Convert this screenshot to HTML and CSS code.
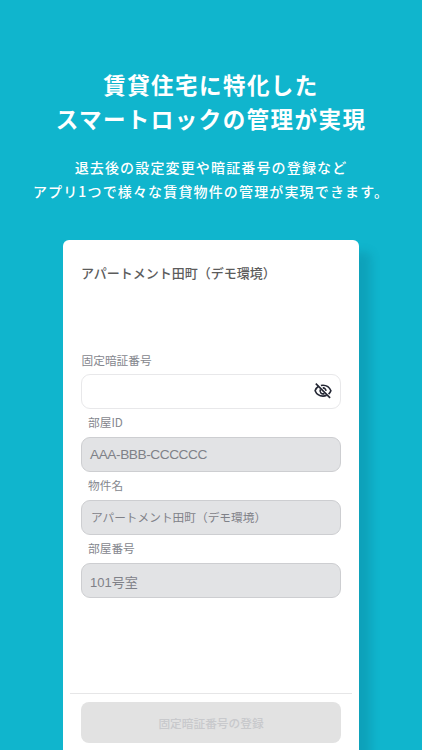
FILE: index.html
```html
<!DOCTYPE html>
<html lang="ja">
<head>
<meta charset="utf-8">
<title>スマートロックの管理</title>
<link rel="stylesheet" href="styles.css">
</head>
<body>
<main class="page">
  <header class="intro">
    <h1 class="headline">賃貸住宅に特化した<br>スマートロックの管理が実現</h1>
    <p class="lead">退去後の設定変更や暗証番号の登録など<br>アプリ1つで様々な賃貸物件の管理が実現できます。</p>
  </header>
  <section class="card">
    <h2 class="title">アパートメント田町（デモ環境）</h2>
    <div class="form">
      <div class="label label-first">固定暗証番号</div>
      <div class="field field-open">
        <svg class="eye" viewBox="0 0 18 18" fill="none" stroke="#232633" stroke-width="1.6">
          <path d="M4.6 4.3C3 5.3 1.8 6.9 1.1 8.8c1.3 3.2 4.3 5.3 7.9 5.3 1.3 0 2.6-.3 3.7-.8M6.9 3.5c.7-.2 1.4-.2 2.1-.2 3.6 0 6.6 2.2 7.9 5.5-.5 1.3-1.3 2.4-2.3 3.3"/>
          <path d="M6.5 7.3a3 3 0 0 0 4 4.2M8.8 5.9a2.9 2.9 0 0 1 3.1 3"/>
          <path d="M1.800 1.600l14.300 14.300"/>
        </svg>
      </div>
      <div class="label">部屋ID</div>
      <div class="field field-id">AAA-BBB-CCCCCC</div>
      <div class="label">物件名</div>
      <div class="field field-name">アパートメント田町（デモ環境）</div>
      <div class="label">部屋番号</div>
      <div class="field field-room">101号室</div>
    </div>
    <footer class="footer">
      <div class="submit">固定暗証番号の登録</div>
    </footer>
  </section>
</main>
</body>
</html>
```
FILE: styles.css
```css
* { box-sizing: border-box; }
body {
  margin: 0;
  background: #10b5cd;
  font-family: "Noto Sans CJK JP", sans-serif;
}
.page {
  height: 750px;
  overflow: hidden;
  display: flex;
  flex-direction: column;
  align-items: center;
}
.intro {
  height: 240px;
  flex: none;
  padding-top: 68px;
  color: #fff;
  text-align: center;
  white-space: nowrap;
}
.headline {
  margin: 0;
  font-size: 22.5px;
  font-weight: 700;
  line-height: 33.5px;
  letter-spacing: 1.45px;
}
.lead {
  margin: 21px 0 0;
  font-size: 14px;
  font-weight: 500;
  line-height: 23.5px;
  letter-spacing: 1.15px;
}
.card {
  width: 296px;
  height: 530px;
  flex: none;
  background: #fff;
  border-radius: 6px 6px 0 0;
  box-shadow: 12px 12px 10px rgba(10, 100, 125, .23);
}
.title {
  margin: 0;
  padding: 22px 0 0 18px;
  height: 110px;
  font-size: 13px;
  font-weight: 500;
  line-height: 22px;
  color: #5c5c5c;
  white-space: nowrap;
}
.form {
  height: 343px;
  padding: 0 18px;
}
.label {
  height: 28px;
  padding: 3px 0 0 7px;
  font-size: 11.7px;
  line-height: 20px;
  color: #85878e;
}
.label-first {
  height: 24px;
  padding: 0 0 0 .5px;
  line-height: 19px;
}
.field {
  height: 35px;
  width: 260px;
  display: flex;
  align-items: center;
  padding-left: 9px;
  border: 1px solid #cdced1;
  border-radius: 9px;
  background: #e2e3e5;
  color: #7f8188;
  font-size: 11.7px;
  white-space: nowrap;
}
.field-open {
  justify-content: flex-end;
  padding-right: 8px;
  padding-bottom: 2px;
  background: #fff;
  border-color: #e8e8ea;
}
.field-id {
  padding-left: 8px;
  padding-bottom: 1px;
  font-family: "Liberation Sans", sans-serif;
  font-size: 13.7px;
  letter-spacing: -.45px;
}
.field-name {
  padding-bottom: 2px;
}
.field-room {
  padding-left: 8px;
  padding-top: 1px;
  font-family: "Liberation Sans", "Noto Sans CJK JP", sans-serif;
  font-size: 13px;
}
.eye {
  width: 18px;
  height: 18px;
}
.footer {
  margin: 0 7px;
  padding: 8px 11px 0;
  border-top: 1px solid #e6e6e7;
}
.submit {
  height: 41px;
  border-radius: 8px;
  background: #e2e2e2;
  color: #c8c9cc;
  font-size: 11.7px;
  font-weight: 500;
  line-height: 41px;
  text-align: center;
}
```
